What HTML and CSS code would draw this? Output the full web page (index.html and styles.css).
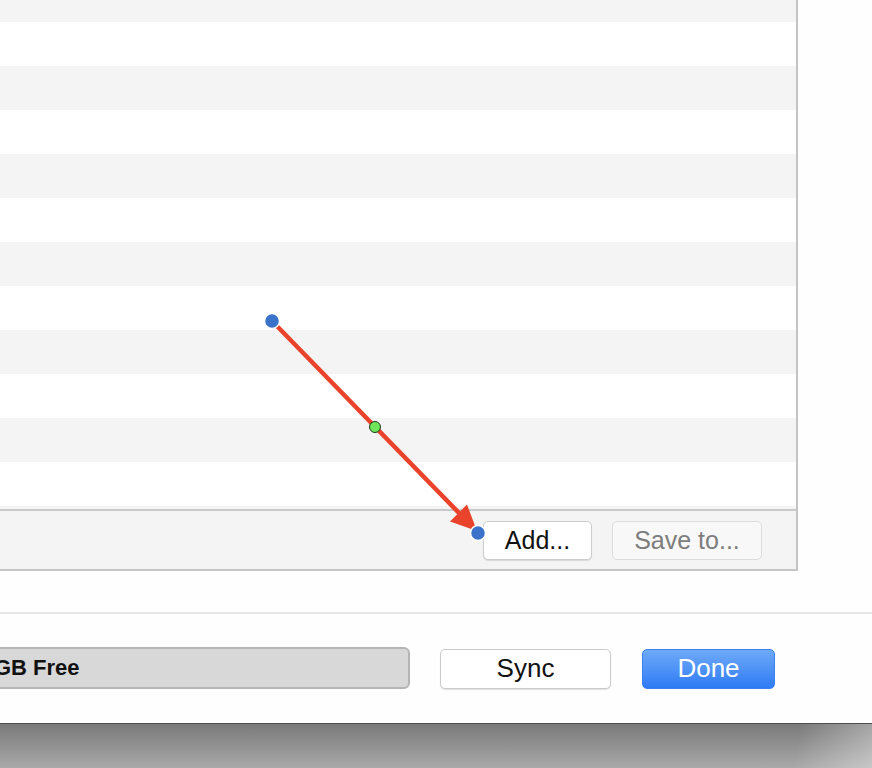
FILE: index.html
```html
<!DOCTYPE html>
<html>
<head>
<meta charset="utf-8">
<link rel="stylesheet" href="styles.css">
</head>
<body>
<div class="window">
  <div class="panel">
    <div class="list">
      <div class="rows">
        <div class="row alt"></div><div class="row"></div>
        <div class="row alt"></div><div class="row"></div>
        <div class="row alt"></div><div class="row"></div>
        <div class="row alt"></div><div class="row"></div>
        <div class="row alt"></div><div class="row"></div>
        <div class="row alt"></div><div class="row"></div>
        <div class="row alt"></div>
      </div>
    </div>
    <div class="toolbar">
      <button class="btn add">Add...</button>
      <button class="btn save" disabled>Save to...</button>
    </div>
  </div>
  <div class="footer">
    <div class="storage"><span class="storage-text">GB Free</span></div>
    <button class="fbtn sync">Sync</button>
    <button class="fbtn done">Done</button>
  </div>
  <svg class="annot" width="872" height="723" viewBox="0 0 872 723">
    <line x1="272" y1="321" x2="459" y2="513" stroke="#e9432b" stroke-width="4.5"/>
    <polygon points="450,521.5 467,504.5 477,531" fill="#e9432b"/>
    <circle cx="272" cy="321" r="7.5" fill="#3a73c9" stroke="#fff" stroke-width="1.5"/>
    <circle cx="375" cy="427" r="5.5" fill="#6fe65a" stroke="#1f3a1b" stroke-width="1"/>
    <circle cx="478" cy="533" r="7.5" fill="#3a73c9" stroke="#fff" stroke-width="1.5"/>
  </svg>
</div>
<div class="desk"></div>
</body>
</html>
```

FILE: styles.css
```css
html, body {
  margin: 0;
  padding: 0;
}
body {
  width: 872px;
  height: 768px;
  overflow: hidden;
  font-family: "Liberation Sans", Arial, sans-serif;
  background: #fff;
}
.window {
  position: relative;
  height: 723px;
  background: #fefefe;
  overflow: hidden;
}
.panel {
  width: 796px;
  border-right: 2px solid #c3c3c3;
  border-bottom: 2px solid #c6c6c6;
}
.list {
  height: 509px;
  overflow: hidden;
  background: #fff;
}
.rows {
  margin-top: -22px;
}
.row {
  height: 44px;
  background: #fff;
}
.row.alt {
  background: #f4f4f4;
}
.toolbar {
  height: 58px;
  border-top: 2px solid #c9c9c9;
  background: #f4f4f4;
  display: flex;
  align-items: center;
  justify-content: flex-end;
  gap: 20px;
  padding-right: 34px;
}
.btn {
  font-family: "Liberation Sans", Arial, sans-serif;
  font-size: 25px;
  height: 39px;
  border-radius: 5px;
  border: 1px solid #cdcdcd;
  background: #fff;
  color: #111;
  padding: 0;
  box-shadow: 0 1px 1px rgba(0,0,0,0.12);
  margin-top: 1px;
}
.btn.add {
  width: 109px;
}
.btn.save {
  width: 150px;
  background: #f8f8f8;
  color: #7d7d7d;
  border-color: #dcdcdc;
  box-shadow: none;
}
.footer {
  margin-top: 41px;
  border-top: 2px solid #e6e6e6;
  padding-top: 33px;
  display: flex;
  align-items: center;
}
.storage {
  width: 414px;
  margin-left: -8px;
  height: 38px;
  background: #d8d8d8;
  border: 2px solid #b5b5b5;
  border-radius: 0 6px 6px 0;
  display: flex;
  align-items: center;
  margin-right: 30px;
  flex-shrink: 0;
}
.storage-text {
  font-weight: bold;
  font-size: 22px;
  color: #111;
}
.fbtn {
  font-family: "Liberation Sans", Arial, sans-serif;
  font-size: 26px;
  height: 40px;
  border-radius: 5px;
  padding: 0;
  margin-top: 1px;
  flex-shrink: 0;
}
.fbtn.sync {
  width: 171px;
  background: #fff;
  border: 1px solid #cbcbcb;
  color: #111;
  box-shadow: 0 1px 1px rgba(0,0,0,0.12);
  margin-right: 31px;
}
.fbtn.done {
  width: 133px;
  color: #fff;
  border: 1px solid #3b80ee;
  background: linear-gradient(to bottom, #6eaaf8, #2f7bf5);
}
.annot {
  position: absolute;
  left: 0;
  top: 0;
  pointer-events: none;
}
.desk {
  height: 44px;
  border-top: 1px solid #4d4d4d;
  background:
    linear-gradient(100deg, rgba(255,255,255,0) 91%, rgba(255,255,255,0.35) 100%),
    linear-gradient(to bottom, #7a7a7a, #a9a9a9);
}
```
